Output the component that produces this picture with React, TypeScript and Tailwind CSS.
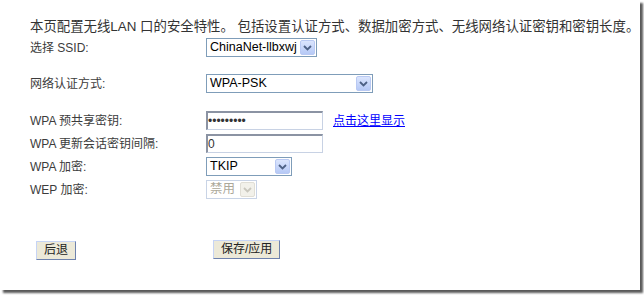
import React from "react";

// XP-style little chevron button used inside the drop-downs
const Arrow = ({ disabled = false }: { disabled?: boolean }) => (
  <span
    className={
      disabled
        ? "flex h-[15px] w-[15px] shrink-0 items-center justify-center rounded-[2px] border border-[#e0ded5] bg-[#f2f1ea]"
        : "flex h-[15px] w-[15px] shrink-0 items-center justify-center rounded-[2px] border border-[#b9c9f3] bg-gradient-to-b from-[#dbe5fd] to-[#b6c9f6]"
    }
  >
    <svg width="9" height="6" viewBox="0 0 9 6">
      <path
        d="M1 1 L4.5 4.5 L8 1"
        fill="none"
        stroke={disabled ? "#c9c7bd" : "#4d6185"}
        strokeWidth="1.8"
      />
    </svg>
  </span>
);

const Select = ({
  value,
  width,
  disabled = false,
}: {
  value: string;
  width: string;
  disabled?: boolean;
}) => (
  <div
    className={`flex h-[19px] shrink-0 items-center justify-between gap-[2px] whitespace-nowrap border pl-[3px] pr-px text-[12.5px] leading-none ${width} ${
      disabled
        ? "border-[#c9d4e6] bg-white text-[#aca899]"
        : "border-[#7f9db9] bg-white text-black"
    }`}
  >
    <span>{value}</span>
    <Arrow disabled={disabled} />
  </div>
);

const TextInput = ({ value }: { value: string }) => (
  <div className="flex h-[19px] w-[117px] items-center border-t-2 border-l-2 border-r border-b border-t-[#8b93a3] border-l-[#8b93a3] border-r-[#c8d2e4] border-b-[#c8d2e4] bg-white text-[12px] leading-none text-[#333]">
    {value}
  </div>
);

const Row = ({
  label,
  children,
  className = "",
}: {
  label: string;
  children: React.ReactNode;
  className?: string;
}) => (
  <div className={`flex items-center ${className}`}>
    <div className="w-[176px] shrink-0 text-[12px] leading-none text-[#3c3c3c]">
      {label}
    </div>
    {children}
  </div>
);

const XpButton = ({ children }: { children: React.ReactNode }) => (
  <button className="h-[19px] border border-t-[#c6d4f5] border-l-[#c6d4f5] border-b-[#6e82ad] border-r-[#6e82ad] bg-[#ece9d8] px-[7px] text-[12px] leading-none text-[#222]">
    {children}
  </button>
);

export default function App() {
  return (
    <div
      className="h-[295px] w-[644px] bg-white"
      style={{ fontFamily: '"Liberation Sans", "Noto Sans CJK SC", sans-serif' }}
    >
      <div className="h-[290px] w-[640px] bg-white pl-[30px] pt-[19px] shadow-[3px_3px_2px_rgba(0,0,0,0.65)]">
        <div className="h-[16px] whitespace-nowrap text-[13.4px] leading-[16px] text-[#333]">
          本页配置无线LAN 口的安全特性。 包括设置认证方式、数据加密方式、无线网络认证密钥和密钥长度。
        </div>

        <Row label="选择 SSID:" className="mt-[3px]">
          <Select value="ChinaNet-llbxwj" width="w-[111px]" />
        </Row>

        <Row label="网络认证方式:" className="mt-[17px]">
          <Select value="WPA-PSK" width="w-[167px]" />
        </Row>

        <div className="mt-[18px] flex flex-col gap-[4px]">
          <Row label="WPA 预共享密钥:">
            <TextInput value="•••••••••" />
            <a
              href="#"
              className="ml-[10px] text-[12px] leading-none text-[#0000ff] underline"
            >
              点击这里显示
            </a>
          </Row>
          <Row label="WPA 更新会话密钥间隔:">
            <TextInput value="0" />
          </Row>
          <Row label="WPA 加密:">
            <Select value="TKIP" width="w-[86px]" />
          </Row>
          <Row label="WEP 加密:">
            <Select value="禁用" width="w-[51px]" disabled />
          </Row>
        </div>

        <div className="mt-[38px] flex items-center">
          <div className="ml-[6px] w-[177px]">
            <XpButton>后退</XpButton>
          </div>
          <XpButton>保存/应用</XpButton>
        </div>
      </div>
    </div>
  );
}
